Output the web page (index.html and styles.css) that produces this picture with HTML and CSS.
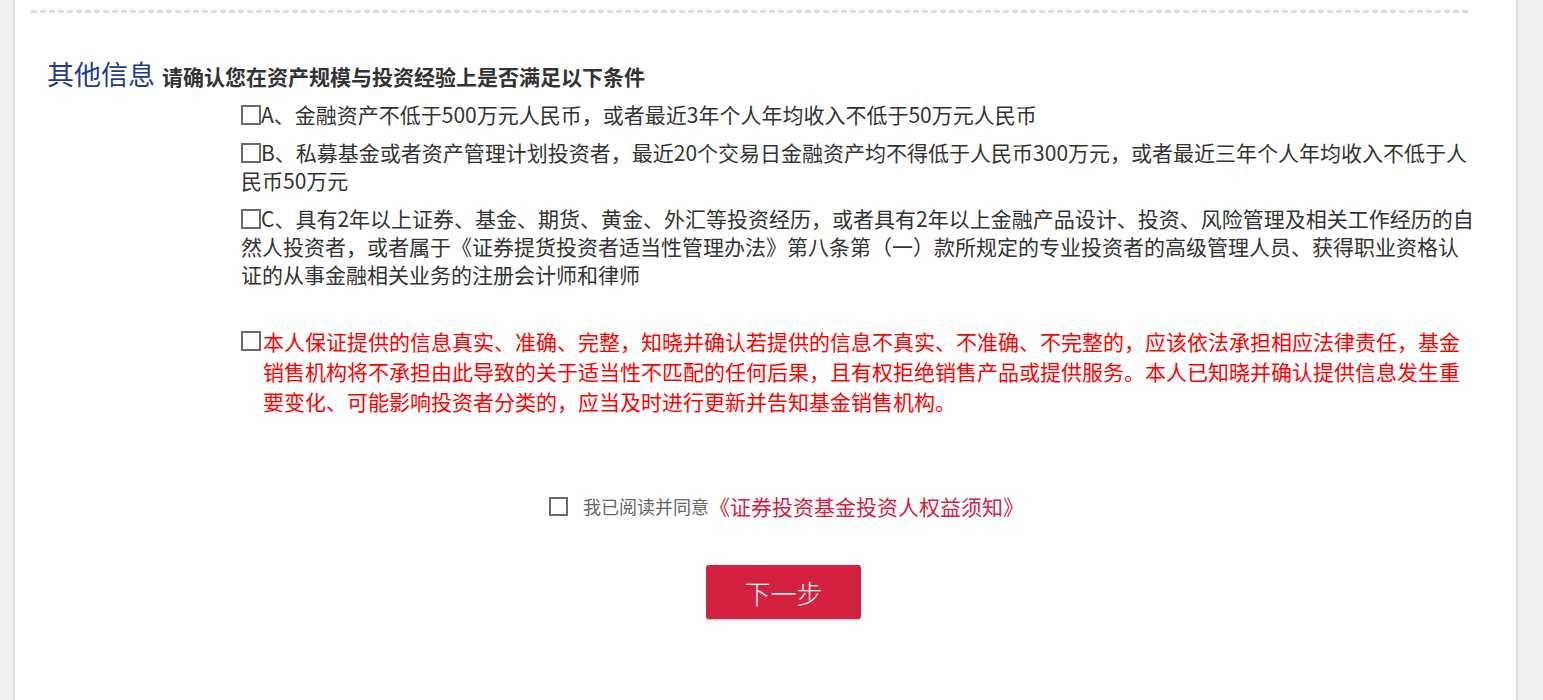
FILE: index.html
```html
<!DOCTYPE html>
<html lang="zh-CN">
<head>
<meta charset="utf-8">
<title>其他信息</title>
<link rel="stylesheet" href="styles.css">
</head>
<body>
<div class="panel">
  <div class="divider"></div>
  <div class="section">
    <div class="title-row">
      <span class="title">其他信息</span>
      <span class="subtitle">请确认您在资产规模与投资经验上是否满足以下条件</span>
    </div>
    <div class="options">
      <div class="option"><span class="box"></span>A、金融资产不低于500万元人民币，或者最近3年个人年均收入不低于50万元人民币</div>
      <div class="option"><span class="box"></span>B、私募基金或者资产管理计划投资者，最近20个交易日金融资产均不得低于人民币300万元，或者最近三年个人年均收入不低于人民币50万元</div>
      <div class="option"><span class="box"></span>C、具有2年以上证券、基金、期货、黄金、外汇等投资经历，或者具有2年以上金融产品设计、投资、风险管理及相关工作经历的自然人投资者，或者属于《证券提货投资者适当性管理办法》第八条第（一）款所规定的专业投资者的高级管理人员、获得职业资格认证的从事金融相关业务的注册会计师和律师</div>
      <div class="pledge">
        <span class="box pledge-box"></span>
        <span class="pledge-text">本人保证提供的信息真实、准确、完整，知晓并确认若提供的信息不真实、不准确、不完整的，应该依法承担相应法律责任，基金销售机构将不承担由此导致的关于适当性不匹配的任何后果，且有权拒绝销售产品或提供服务。本人已知晓并确认提供信息发生重要变化、可能影响投资者分类的，应当及时进行更新并告知基金销售机构。</span>
      </div>
    </div>
    <div class="actions">
      <div class="agree">
        <span class="agree-box"></span>
        <span class="agree-text">我已阅读并同意</span><span class="agree-link">《证券投资基金投资人权益须知》</span>
      </div>
      <button class="next" type="button">下一步</button>
    </div>
  </div>
</div>
</body>
</html>
```
FILE: styles.css
```css
html, body {
  margin: 0;
  padding: 0;
  background: #eeeeee;
}
body {
  font-family: "Noto Sans CJK SC", "Noto Sans", sans-serif;
  color: #333333;
}
.panel {
  margin-left: 13px;
  width: 1501px;
  min-height: 700px;
  background: #ffffff;
  border-left: 2px solid #dddddd;
  border-right: 2px solid #dddddd;
  padding-top: 10px;
  box-sizing: content-box;
}
.divider {
  height: 3px;
  margin: 0 45px 0 16px;
  background: repeating-linear-gradient(90deg, #dddddd 0 6px, transparent 6px 9px);
}
.section {
  padding-top: 43px;
}
.title-row {
  display: flex;
  align-items: baseline;
  padding-left: 32px;
  height: 36px;
  line-height: 36px;
}
.title {
  font-size: 27px;
  color: #1f3c88;
}
.subtitle {
  margin-left: 7px;
  font-size: 21px;
  font-weight: bold;
  color: #333333;
}
.options {
  margin-left: 226px;
  width: 1237px;
  margin-top: 8px;
  font-size: 21px;
}
.option {
  line-height: 28px;
  margin-bottom: 10px;
}
.box {
  display: inline-block;
  width: 16px;
  height: 16px;
  border: 2px solid #6a6a6a;
  vertical-align: -2px;
}
.pledge {
  display: flex;
  align-items: flex-start;
  margin-top: 38px;
  color: #ff0000;
  line-height: 30px;
}
.pledge-box {
  flex: none;
  margin-top: 5px;
  margin-right: 2px;
}
.pledge-text {
  flex: 1;
}
.actions {
  display: flex;
  flex-direction: column;
  align-items: center;
  padding-left: 36px;
  margin-top: 75px;
}
.agree {
  display: flex;
  align-items: center;
  height: 30px;
  margin-left: 6px;
}
.agree-box {
  width: 15px;
  height: 15px;
  border: 2px solid #6a6a6a;
  margin-right: 15px;
}
.agree-text {
  font-size: 18px;
  color: #666666;
}
.agree-link {
  font-size: 21px;
  color: #d42141;
}
.next {
  margin-top: 44px;
  width: 155px;
  height: 54px;
  border: none;
  border-radius: 3px;
  background: #d4213f;
  color: #ffffff;
  font-family: "Noto Sans CJK SC", sans-serif;
  font-size: 26px;
  font-weight: 300;
  box-shadow: 0 1px 1px rgba(0, 0, 0, 0.25);
  cursor: pointer;
}
```
